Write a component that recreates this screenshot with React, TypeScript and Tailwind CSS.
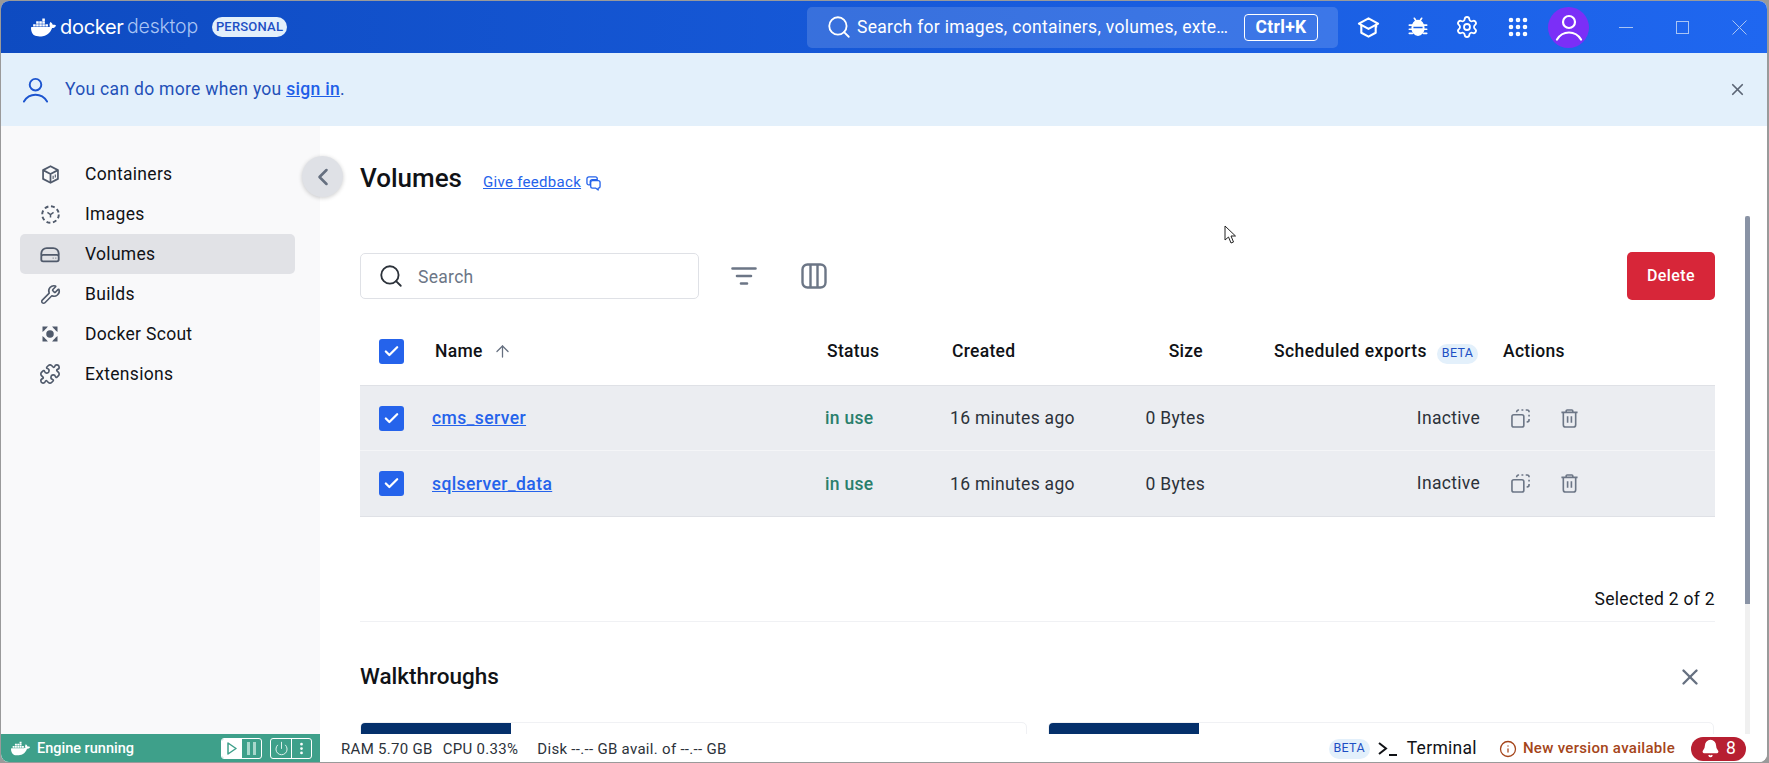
import { Search, ArrowUp, Check, Power, EllipsisVertical, ChevronLeft, X, Wrench, Puzzle, Settings, Grip, Info, Bell } from "lucide-react";
import { SiDocker } from "react-icons/si";

const ContainersIcon = () => (
  <svg viewBox="0 0 24 24" className="w-[21px] h-[21px]" fill="none" stroke="#505a6b" strokeWidth="2" strokeLinejoin="round">
    <path d="M12 2.500l8.500 4.500v10L12 21.500 3.500 17V7z" />
    <path d="M3.500 7L12 11.500 20.500 7M12 11.500v10" />
    <path d="M15 13.500v3.500M17.500 12v3.500" strokeWidth="1.300" />
  </svg>
);
const ImagesIcon = () => (
  <svg viewBox="0 0 24 24" className="w-[21px] h-[21px]" fill="none" stroke="#505a6b" strokeWidth="2.200">
    <circle cx="12" cy="12" r="9.500" strokeDasharray="4.500 3" />
    <path d="M8.500 9.500L12 12l3.500-2.500M12 12v3.500" strokeWidth="1.700" />
  </svg>
);
const VolumesIcon = () => (
  <svg viewBox="0 0 24 24" className="w-[22px] h-[22px]" fill="none" stroke="#505a6b" strokeWidth="2" strokeLinejoin="round">
    <path d="M2.500 13.500v-2A6 6 0 0 1 8.500 5.500h7a6 6 0 0 1 6 6v2" />
    <rect x="2.500" y="13" width="19" height="7" rx="2" />
    <path d="M15 16.500h.8M18 16.500h.8" strokeWidth="1.600" />
  </svg>
);
const ScoutIcon = () => (
  <svg viewBox="0 0 24 24" className="w-[20px] h-[20px]" fill="#505a6b">
    <circle cx="12" cy="12" r="4.500" />
    <path d="M3 3h6.500L7.500 5.500A9 9 0 0 0 5.500 7.500L3 9.500zM21 3h-6.500l2 2.500a9 9 0 0 1 2 2L21 9.500zM3 21h6.500l-2-2.500a9 9 0 0 1-2-2L3 14.500zM21 21h-6.500l2-2.500a9 9 0 0 0 2-2l2.500-2z" />
  </svg>
);
const CopyDashed = () => (
  <svg viewBox="0 0 20 20" className="w-[19px] h-[19px]" fill="none" stroke="#6c7686" strokeWidth="1.700">
    <rect x="1" y="6" width="12.500" height="13" rx="2" />
    <path d="M6 3.500V3a2 2 0 0 1 2-2h.5M11 1h2M15.500 1h1.500a2 2 0 0 1 2 2v.5M19 6v2M19 10.500v1a2 2 0 0 1-2 2h-.5" />
  </svg>
);
const TrashIcon = () => (
  <svg viewBox="0 0 20 20" className="w-[19px] h-[19px]" fill="none" stroke="#6c7686" strokeWidth="1.700" strokeLinejoin="round">
    <path d="M1.500 3.500h17M6.500 3.500V2a1 1 0 0 1 1-1h5a1 1 0 0 1 1 1v1.500" />
    <path d="M3.500 3.500v13a2.500 2.500 0 0 0 2.500 2.500h8a2.500 2.500 0 0 0 2.500-2.500v-13" />
    <path d="M8 7.500v7M12 7.500v7" />
  </svg>
);
const GradIcon = () => (
  <svg viewBox="0 0 24 24" className="w-[23px] h-[23px]" fill="none" stroke="#fff" strokeWidth="2.200" strokeLinejoin="round">
    <path d="M12 2.500L22 8l-10 5.500L2 8z" />
    <path d="M4.500 9.500v8L12 21.500l7.500-4v-8" />
    <path d="M20 8v4" />
  </svg>
);
const BugIcon = () => (
  <svg viewBox="0 0 24 24" className="w-[22px] h-[22px]" fill="#fff" stroke="#fff" strokeWidth="1.800">
    <path d="M8 2.500l2 3M16 2.500l-2 3M2.500 10h3M2.500 14.500h3M2.500 19h3.500M21.500 10h-3M21.500 14.500h-3M21.500 19H18" fill="none" strokeLinecap="round" />
    <ellipse cx="12" cy="13" rx="6.300" ry="8" />
    <path d="M7 12.500h10" stroke="#1b60e4" strokeWidth="1.600" />
  </svg>
);
const UserOutline = ({ color, size, w }: { color: string; size: number; w: number }) => (
  <svg viewBox="0 0 28 28" width={size} height={size} fill="none" stroke={color} strokeWidth={w} strokeLinecap="round">
    <circle cx="14" cy="9" r="6" />
    <path d="M2 26.500c3-5 7.500-7 12-7s9 2 12 7" />
  </svg>
);
const FeedbackIcon = () => (
  <svg viewBox="0 0 16 16" className="w-[15px] h-[15px]" fill="none" stroke="#2563eb" strokeWidth="1.400" strokeLinejoin="round">
    <path d="M1 3a2 2 0 0 1 2-2h7a2 2 0 0 1 2 2v1H6.500A2 2 0 0 0 4.500 6v3.500H3a2 2 0 0 1-2-2z" />
    <path d="M5 7a2 2 0 0 1 2-2h6a2 2 0 0 1 2 2v4a2 2 0 0 1-2 2v2l-2.500-2H7a2 2 0 0 1-2-2z" />
  </svg>
);
const FilterIcon = () => (
  <svg viewBox="0 0 26 20" className="w-[26px] h-[20px]" fill="none" stroke="#6c7686" strokeWidth="2.600" strokeLinecap="round">
    <path d="M1.500 2.500h23M6 10h14M10 17.500h6" />
  </svg>
);
const ColumnsIcon = () => (
  <svg viewBox="0 0 26 26" className="w-[26px] h-[26px]" fill="none" stroke="#6c7686" strokeWidth="2.400">
    <rect x="1.500" y="1.500" width="23" height="23" rx="5" />
    <path d="M9.500 1.500v23M16.500 1.500v23" />
  </svg>
);
const Box = () => (
  <div className="w-[25px] h-[25px] rounded-[3px] bg-[#2563eb] flex items-center justify-center">
    <Check size={17} strokeWidth={3.2} color="#fff" />
  </div>
);
const Beta = () => (
  <span className="inline-flex items-center justify-center w-[41px] h-[20px] rounded-full bg-[#e3f0fb] text-[#1d4fc4] text-[12.5px] tracking-[0.3px]">BETA</span>
);

const nav = [
  { label: "Containers", icon: <ContainersIcon /> },
  { label: "Images", icon: <ImagesIcon /> },
  { label: "Volumes", icon: <VolumesIcon />, active: true },
  { label: "Builds", icon: <Wrench size={21} strokeWidth={1.8} color="#505a6b" /> },
  { label: "Docker Scout", icon: <ScoutIcon /> },
  { label: "Extensions", icon: <Puzzle size={22} strokeWidth={1.8} color="#505a6b" /> },
];
const rows = ["cms_server", "sqlserver_data"];
const cols = "grid grid-cols-[72px_393px_125px_130px_125px_275px_1fr] items-center";

export default function App() {
  return (
    <div className="relative w-[1769px] h-[763px] overflow-hidden bg-[#9a9a9a] pt-px pl-px pr-[2px] pb-px font-['Roboto',sans-serif] text-[17.5px] tracking-[0.3px] text-[#101216]">
      <div className="w-full h-full flex flex-col rounded-lg overflow-hidden bg-white">
        <header className="h-[52px] shrink-0 flex items-center bg-linear-to-r from-[#0e4bc1] to-[#1f67f0] text-white">
          <div className="flex items-center pl-[30px] w-[806px] shrink-0">
            <SiDocker size={25} color="#fff" />
            <span className="ml-[4px] w-[63px] font-['Inter',sans-serif] text-[20px] leading-none tracking-[-0.3px]">docker</span>
            <span className="ml-[4px] w-[73px] font-['Inter',sans-serif] font-light text-[19.5px] leading-none tracking-[-0.2px] text-[#a9c4f4]">desktop</span>
            <span className="ml-[12px] w-[75px] h-[20px] rounded-full bg-[#e3f0fb] text-[#1d4fc4] text-[13px] font-medium flex items-center justify-center tracking-[0.2px]">PERSONAL</span>
          </div>
          <div className="w-[531px] h-[41px] shrink-0 rounded-[5px] bg-white/15 flex items-center pl-[19px]">
            <Search size={26} strokeWidth={1.7} color="#fff" />
            <span className="ml-[5px] w-[387px] whitespace-nowrap">Search for images, containers, volumes, exte…</span>
            <span className="w-[74px] h-[27px] border border-white rounded-[4px] flex items-center justify-center font-bold text-[17.5px]">Ctrl+K</span>
          </div>
          <div className="ml-[19px] flex items-center">
            <div className="w-[23px] flex justify-center"><GradIcon /></div>
            <div className="w-[22px] ml-[27px] flex justify-center"><BugIcon /></div>
            <div className="w-[24px] ml-[26px] flex justify-center"><Settings size={24} strokeWidth={1.8} color="#fff" /></div>
            <div className="w-[24px] ml-[27px] flex justify-center"><Grip size={24} strokeWidth={2.6} color="#fff" /></div>
            <div className="ml-[18px] w-[41px] h-[41px] rounded-full bg-[#7b2ff7] flex items-center justify-center"><UserOutline color="#fff" size={28} w={2.2} /></div>
          </div>
          <div className="flex items-center ml-[30px]">
            <div className="w-[14px] h-px bg-[#a9c4f4]" />
            <div className="ml-[43px] w-[13px] h-[13px] border border-[#a9c4f4]" />
            <svg viewBox="0 0 15 15" className="ml-[43px] w-[15px] h-[15px]" fill="none" stroke="#a9c4f4" strokeWidth="1"><path d="M.5.500l14 14M14.500.500l-14 14" /></svg>
          </div>
        </header>

        <div className="h-[73px] shrink-0 bg-[#e3f0fb] flex items-center pl-[21px] pr-[20px]">
          <UserOutline color="#1d55cf" size={27} w={2} />
          <p className="ml-[16px] -mt-px text-[#2450b8]">You can do more when you <a className="underline font-medium text-[#1f5fe8]">sign in</a>.</p>
          <X size={19} strokeWidth={2.2} color="#5c6675" className="ml-auto" />
        </div>

        <div className="relative flex-1 min-h-0 flex">
          <aside className="w-[319px] shrink-0 bg-[#f9f9fa] pt-[28px] pl-[19px]">
            {nav.map((n) => (
              <div key={n.label} className={`w-[275px] h-[40px] flex items-center rounded-[5px] ${n.active ? "bg-[#e1e2e6]" : ""}`}>
                <div className="w-[24px] ml-[18px] mr-[1px] flex justify-center">{n.icon}</div>
                <span className="ml-[22px]">{n.label}</span>
              </div>
            ))}
          </aside>
          <button className="absolute left-[301px] top-[30px] w-[41px] h-[41px] rounded-full bg-[#dfe1e6] shadow-[0_1px_4px_rgba(0,0,0,0.2)] flex items-center justify-center">
            <ChevronLeft size={28} strokeWidth={2.2} color="#667080" />
          </button>

          <main className="flex-1 min-w-0 flex overflow-hidden">
            <div className="flex-1 min-w-0 pl-[40px] pr-[30px] pt-[36px]">
              <div className="h-[32px] flex items-center mb-[58px]">
                <h1 className="text-[26px] font-medium leading-none tracking-normal">Volumes</h1>
                <a className="ml-[21px] mt-[8px] text-[15px] text-[#2563eb] underline">Give feedback</a>
                <span className="ml-[5px] mt-[10px]"><FeedbackIcon /></span>
              </div>

              <div className="h-[48px] flex items-center">
                <div className="w-[339px] h-[46px] border border-[#dfe1e6] rounded-[5px] flex items-center pl-[17px]">
                  <Search size={26} strokeWidth={1.7} color="#2c323a" />
                  <span className="ml-[14px] mt-[2px] text-[#6c7686]">Search</span>
                </div>
                <div className="ml-[32px]"><FilterIcon /></div>
                <div className="ml-[44px]"><ColumnsIcon /></div>
                <button className="ml-auto w-[88px] h-[48px] rounded-[5px] bg-[#d72639] text-white font-medium text-[16px] tracking-[0.4px]">Delete</button>
              </div>

              <div className={`${cols} mt-[18px] h-[68px] border-b border-[#dfe1e6] font-medium`}>
                <div className="pl-[19px]"><Box /></div>
                <div className="pl-[3px] flex items-center">Name<ArrowUp size={19} strokeWidth={1.6} color="#667080" className="ml-[10px]" /></div>
                <div className="pl-[2px]">Status</div>
                <div className="pl-[2px]">Created</div>
                <div className="text-right pr-[2px]">Size</div>
                <div className="flex items-center justify-end pr-[2px]"><span className="tracking-[0.42px]">Scheduled exports</span><span className="ml-[10px] font-normal"><Beta /></span></div>
                <div className="pl-[23px]">Actions</div>
              </div>
              {rows.map((r, i) => (
                <div key={r} className={`${cols} bg-[#ebedf1] border-b ${i === 0 ? "h-[65px] border-[#f4f5f7]" : "h-[66px] border-[#dfe1e6]"}`}>
                  <div className="pl-[19px]"><Box /></div>
                  <a className="mt-px font-medium text-[#2563eb] underline tracking-[0.4px]">{r}</a>
                  <div className="mt-px font-medium text-[#2a7f6c]">in use</div>
                  <div className="mt-px text-[#2c323a]">16 minutes ago</div>
                  <div className="mt-px text-right text-[#2c323a]">0 Bytes</div>
                  <div className="text-right text-[#2c323a]">Inactive</div>
                  <div className="flex items-center pl-[31px]"><CopyDashed /><span className="ml-[30px]"><TrashIcon /></span></div>
                </div>
              ))}

              <div className="mt-[70px] h-[24px] text-right leading-[24px]">Selected 2 of 2</div>
              <div className="mt-[10px] border-t border-[#f0f1f4]" />
              <div className="mt-[40px] h-[30px] flex items-center justify-between">
                <h2 className="text-[22.5px] font-medium tracking-normal">Walkthroughs</h2>
                <X size={26} strokeWidth={2.2} color="#667080" className="mr-[12px]" />
              </div>
              <div className="mt-[30px] grid grid-cols-[667px_1fr] gap-[21px] pr-px">
                {[0, 1].map((k) => (
                  <div key={k} className="h-[40px] rounded-t-[5px] border border-[#f0f1f4]">
                    <div className="w-[150px] h-[40px] rounded-tl-[4px] bg-[#04306b]" />
                  </div>
                ))}
              </div>
            </div>
            <div className="w-[5px] mr-[17px] mt-[90px] shrink-0 bg-[#f0f0f0]">
              <div className="h-[388px] rounded-t-[2px] bg-[#8993a5]" />
            </div>
          </main>
        </div>

        <footer className="h-[28px] shrink-0 flex items-center bg-white text-[15px] text-[#2c323a] z-10">
          <div className="w-[319px] h-full shrink-0 bg-[#3ea08a] flex items-center text-white tracking-normal">
            <SiDocker size={19} color="#fff" className="ml-[10px]" />
            <span className="ml-[7px] mt-px w-[96px] font-medium text-[14.5px] whitespace-nowrap">Engine running</span>
            <div className="ml-[88px] w-[41px] h-[21px] border border-white rounded-[3px] flex overflow-hidden">
              <div className="w-[20px] bg-white flex items-center justify-center">
                <svg viewBox="0 0 10 13" className="w-[10px] h-[13px]" fill="none" stroke="#3ea08a" strokeWidth="1.500" strokeLinejoin="round"><path d="M1 1l8 5.500L1 12z" /></svg>
              </div>
              <div className="flex-1 flex items-center justify-center gap-[3px]">
                <div className="w-[3px] h-[13px] bg-[#a8d8cc]" />
                <div className="w-[3px] h-[13px] bg-[#a8d8cc]" />
              </div>
            </div>
            <div className="ml-[8px] w-[42px] h-[21px] border border-white rounded-[3px] flex">
              <div className="w-[21px] border-r border-white flex items-center justify-center"><Power size={15} strokeWidth={1.5} color="#e6f4f1" /></div>
              <div className="flex-1 flex items-center justify-center"><EllipsisVertical size={15} strokeWidth={2.4} color="#fff" /></div>
            </div>
          </div>
          <span className="ml-[21px] mt-[2px] whitespace-nowrap">RAM 5.70 GB</span>
          <span className="ml-[10px] mt-[2px] whitespace-nowrap">CPU 0.33%</span>
          <span className="ml-[19px] mt-[2px] whitespace-nowrap">Disk --.-- GB avail. of --.-- GB</span>
          <div className="ml-auto mt-[1px] flex items-center">
            <Beta />
            <svg viewBox="0 0 20 14" className="ml-[8px] w-[20px] h-[14px]" fill="none" stroke="#101216" strokeWidth="2"><path d="M1 1l7 5.500L1 12M11 13h8" /></svg>
            <span className="ml-[9px] text-[17.5px] text-[#101216]">Terminal</span>
            <Info size={18} strokeWidth={1.7} color="#a5451a" className="ml-[22px]" />
            <span className="ml-[6px] font-medium text-[#a5451a] whitespace-nowrap">New version available</span>
            <div className="ml-[16px] mr-[21px] w-[55px] h-[24px] rounded-full bg-[#b71f31] text-white flex items-center justify-center">
              <Bell size={19} fill="#fff" color="#fff" />
              <span className="ml-[6px] text-[17.5px]">8</span>
            </div>
          </div>
        </footer>
      </div>
      <svg viewBox="0 0 12 19" className="absolute left-[1224px] top-[225px] w-[12px] h-[19px]" fill="#fff" stroke="#222" strokeWidth="1"><path d="M1 1v14l3.500-3 2.500 6 2.500-1-2.500-6h4.500z" /></svg>
    </div>
  );
}
